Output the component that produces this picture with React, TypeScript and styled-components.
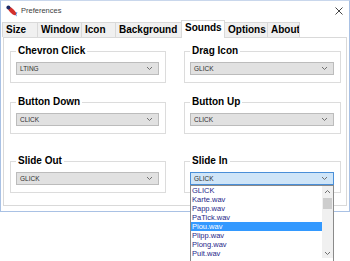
import React from 'react'
import styled, { createGlobalStyle } from 'styled-components'

const GlobalStyle = createGlobalStyle`
	html, body {
		margin: 0;
		padding: 0;
		background: #ffffff;
	}
	body {
		font-family: "Liberation Sans", Arial, sans-serif;
		overflow: hidden;
	}
`

const tabs = [
	{ label: 'Size', width: 36 },
	{ label: 'Window', width: 45 },
	{ label: 'Icon', width: 35 },
	{ label: 'Background', width: 67 },
	{ label: 'Sounds', width: 44, active: true },
	{ label: 'Options', width: 44 },
	{ label: 'About', width: 33 },
]

const sounds = [
	{ title: 'Chevron Click', value: 'LTING' },
	{ title: 'Drag Icon', value: 'GLICK' },
	{ title: 'Button Down', value: 'CLICK' },
	{ title: 'Button Up', value: 'CLICK' },
	{ title: 'Slide Out', value: 'GLICK' },
	{ title: 'Slide In', value: 'GLICK', open: true },
]

const wavFiles = ['GLICK', 'Karte.wav', 'Papp.wav', 'PaTick.wav', 'Piou.wav', 'Plipp.wav', 'Plong.wav', 'Puit.wav']

const Chevron = ({ up }: { up?: boolean }) => (
	<svg width="7" height="5" viewBox="0 0 7 5">
		<polyline
			points={up ? '1,4 3.5,1.5 6,4' : '1,1 3.5,3.5 6,1'}
			fill="none"
			stroke="#707070"
			strokeWidth="1"
		/>
	</svg>
)

const AppIcon = () => (
	<svg width="13" height="13" viewBox="0 0 13 13">
		<path d="M9 10 L12 12.5 L10.5 9 Z" fill="#3b6fc4" />
		<path d="M10 8 L12.5 8.5 L11 11 Z" fill="#5a8ede" />
		<ellipse cx="7" cy="7" rx="5.2" ry="2.2" transform="rotate(45 7 7)" fill="#d3302c" />
		<circle cx="3.4" cy="3.4" r="2" fill="#1d2a66" />
	</svg>
)

const SoundCombo: React.FC<{ value: string; open?: boolean }> = ({ value, open }) => (
	<ComboWrap>
		<Combo focused={open}>
			<span>{value}</span>
			<Chevron />
		</Combo>
		{open && (
			<DropList>
				<Items>
					{wavFiles.map((f) => (
						<Item key={f} selected={f === 'Piou.wav'}>{f}</Item>
					))}
				</Items>
				<ScrollBar>
					<ScrollArrow><Chevron up /></ScrollArrow>
					<Thumb />
					<ScrollSpacer />
					<ScrollArrow><Chevron /></ScrollArrow>
				</ScrollBar>
			</DropList>
		)}
	</ComboWrap>
)

const App: React.FC = () => {
	return (
		<Screen>
			<GlobalStyle />
			<Frame>
				<TitleBar>
					<AppIcon />
					<Title>Preferences</Title>
					<Close>
						<svg width="8" height="8" viewBox="0 0 8 8">
							<path d="M0.5 0.5 L7.5 7.5 M7.5 0.5 L0.5 7.5" stroke="#444" strokeWidth="1" />
						</svg>
					</Close>
				</TitleBar>

				<TabStrip>
					{tabs.map((t) => (
						<Tab key={t.label} width={t.width} active={t.active}>
							{t.label}
						</Tab>
					))}
				</TabStrip>

				<Panel>
					{sounds.map((s) => (
						<Group key={s.title}>
							<Legend>{s.title}</Legend>
							<SoundCombo value={s.value} open={s.open} />
						</Group>
					))}
				</Panel>
			</Frame>
		</Screen>
	)
}

const Screen = styled.div`
	width: 350px;
	height: 261px;
	overflow: hidden;
	background: #ffffff;
	position: relative;
`

const Frame = styled.div`
	width: 350px;
	height: 212px;
	box-sizing: border-box;
	border: 1px solid #a9c1e4;
	border-top-color: #c9d7ec;
	background: #ffffff;
	display: flex;
	flex-direction: column;
`

const TitleBar = styled.div`
	height: 19px;
	display: flex;
	align-items: center;
	padding: 0 6px 0 4px;
	gap: 3px;
`

const Title = styled.span`
	font-size: 7.5px;
	color: #404040;
	flex: 1;
`

const Close = styled.span`
	display: flex;
	align-items: center;
	margin-top: 1px;
`

const TabStrip = styled.div`
	height: 17px;
	display: flex;
	align-items: flex-end;
	padding-left: 1px;
`

const Tab = styled.div<{ width: number; active?: boolean }>`
	width: ${(p) => p.width}px;
	height: ${(p) => (p.active ? 18 : 15)}px;
	box-sizing: border-box;
	margin-left: -1px;
	margin-bottom: ${(p) => (p.active ? -1 : 0)}px;
	&:first-child {
		margin-left: 0;
	}
	padding-left: 3px;
	border: 1px solid #d9d9d9;
	border-bottom: none;
	background: ${(p) => (p.active ? '#ffffff' : '#f0f0f0')};
	position: relative;
	z-index: ${(p) => (p.active ? 2 : 1)};
	font-size: 10px;
	font-weight: 700;
	line-height: ${(p) => (p.active ? 13 : 14)}px;
	color: #000000;
	white-space: nowrap;
	overflow: hidden;
`

const Panel = styled.div`
	margin: 0 2px;
	height: 169px;
	box-sizing: border-box;
	border: 1px solid #d9d9d9;
	background: #ffffff;
	padding: 7px 0 0 6px;
	display: grid;
	grid-template-columns: 156px 157px;
	grid-template-rows: 51px 59px auto;
	column-gap: 18px;
	align-items: start;
	position: relative;
	z-index: 1;
`

const Group = styled.fieldset`
	margin: 0;
	padding: 5px 6px 7px 5px;
	min-width: 0;
	border: 1px solid #dcdcdc;
`

const Legend = styled.legend`
	padding: 0 2px;
	font-size: 10px;
	line-height: 12px;
	font-weight: 700;
	color: #000000;
`

const ComboWrap = styled.div`
	position: relative;
`

const Combo = styled.div<{ focused?: boolean }>`
	height: 13px;
	box-sizing: border-box;
	border: 1px solid ${(p) => (p.focused ? '#4a8fd8' : '#bcbcbc')};
	background: ${(p) => (p.focused ? '#cfe5f8' : '#e1e1e1')};
	display: flex;
	align-items: center;
	justify-content: space-between;
	padding: 0 5px 0 3px;
	font-size: 6.5px;
	color: #303030;
`

const DropList = styled.div`
	position: absolute;
	top: 13px;
	left: 0;
	right: 0;
	height: 80px;
	box-sizing: border-box;
	border: 1px solid #8a8a8a;
	background: #ffffff;
	display: flex;
	align-items: flex-start;
	z-index: 5;
`

const Items = styled.div`
	flex: 1;
	display: flex;
	flex-direction: column;
`

const Item = styled.div<{ selected?: boolean }>`
	height: 9px;
	line-height: 9px;
	padding-left: 1px;
	font-size: 7.5px;
	color: ${(p) => (p.selected ? '#ffffff' : '#27278a')};
	background: ${(p) => (p.selected ? '#3399ff' : 'transparent')};
`

const ScrollBar = styled.div`
	width: 11px;
	height: 72px;
	background: #f0f0f0;
	display: flex;
	flex-direction: column;
`

const ScrollArrow = styled.div`
	height: 10px;
	display: flex;
	align-items: center;
	justify-content: center;
`

const Thumb = styled.div`
	height: 11px;
	margin: 2px 1px 0;
	background: #cdcdcd;
`

const ScrollSpacer = styled.div`
	flex: 1;
`

export default App
